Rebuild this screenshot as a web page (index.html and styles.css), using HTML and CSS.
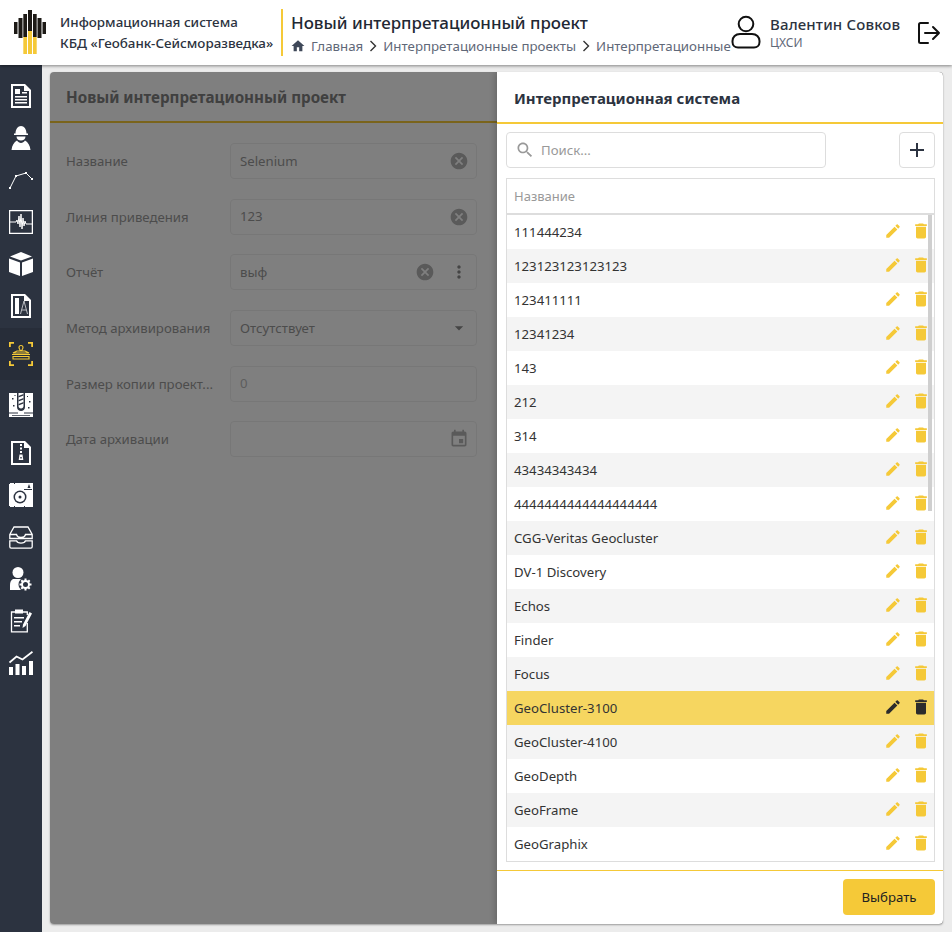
FILE: index.html
```html
<!DOCTYPE html>
<html lang="ru">
<head>
    <meta charset="UTF-8">
    <title>Новый интерпретационный проект</title>
    <link rel="stylesheet" href="styles.css">
</head>
<body>
    <svg class="sprite" width="0" height="0">
        <symbol id="i-edit" viewBox="0 0 24 24"><path d="M3 17.25V21h3.75L17.81 9.94l-3.75-3.75L3 17.25zM20.71 7.04c.39-.39.39-1.02 0-1.41l-2.34-2.34c-.39-.39-1.02-.39-1.41 0l-1.83 1.83 3.75 3.75 1.83-1.83z"/></symbol>
        <symbol id="i-del" viewBox="0 0 24 24"><path d="M6 19c0 1.1.9 2 2 2h8c1.1 0 2-.9 2-2V7H6v12zM19 4h-3.5l-1-1h-5l-1 1H5v2h14V4z"/></symbol>
        <symbol id="i-clear" viewBox="0 0 24 24"><path d="M12 2C6.47 2 2 6.47 2 12s4.47 10 10 10 10-4.47 10-10S17.53 2 12 2zm5 13.59L15.59 17 12 13.41 8.41 17 7 15.59 10.59 12 7 8.41 8.41 7 12 10.59 15.59 7 17 8.41 13.41 12 17 15.59z"/></symbol>
    </svg>

    <header class="topbar">
        <svg class="logo" width="32" height="44" viewBox="0 0 32 44">
            <rect x="0" y="12" width="3.500" height="12" fill="#1d1a16"/>
            <rect x="4.500" y="8" width="4" height="20" fill="#1d1a16"/>
            <rect x="9.300" y="4" width="3.700" height="23" fill="#1d1a16"/>
            <rect x="14" y="0" width="4" height="21" fill="#1d1a16"/>
            <rect x="19" y="4" width="3.700" height="23" fill="#1d1a16"/>
            <rect x="23.500" y="8" width="4" height="20" fill="#1d1a16"/>
            <rect x="28.500" y="12" width="3.500" height="12" fill="#1d1a16"/>
            <rect x="9.300" y="27" width="3.700" height="17" fill="#f5c938"/>
            <rect x="14" y="21" width="4" height="23" fill="#f5c938"/>
            <rect x="19" y="27" width="3.700" height="17" fill="#f5c938"/>
        </svg>
        <div class="system-name">
            <div>Информационная система</div>
            <div>КБД «Геобанк-Сейсморазведка»</div>
        </div>
        <div class="page-head">
            <div class="page-title">Новый интерпретационный проект</div>
            <div class="crumbs">
                <svg class="crumb-home" width="14" height="14" viewBox="0 0 24 24"><path d="M10 21v-7h4v7h5.500v-9H23L12 2 1 12h3.500v9z"/></svg>
                <span>Главная</span>
                <svg class="crumb-sep" width="10" height="12" viewBox="0 0 10 12"><path d="M2.500 1l5 5-5 5"/></svg>
                <span>Интерпретационные проекты</span>
                <svg class="crumb-sep" width="10" height="12" viewBox="0 0 10 12"><path d="M2.500 1l5 5-5 5"/></svg>
                <span>Интерпретационные</span>
            </div>
        </div>
        <div class="user">
            <svg class="user-icon" width="30" height="34" viewBox="0 0 30 34"><circle cx="15" cy="9" r="7.300"/><path d="M9 19h12c4.500 0 7.500 3 7.500 7v1c0 3.500-2.500 5.500-5.500 5.500H7c-3 0-5.500-2-5.500-5.500v-1c0-4 3-7 7.500-7z"/></svg>
            <div class="user-text">
                <div class="user-name">Валентин Совков</div>
                <div class="user-org">ЦХСИ</div>
            </div>
            <svg class="logout" width="24" height="24" viewBox="0 0 24 24"><path d="M11 2H3.500C2.500 2 2 2.500 2 3.500v17c0 1 .5 1.500 1.500 1.500H11M8 12h14M16 6l6 6-6 6"/></svg>
        </div>
    </header>

    <div class="layout">
        <nav class="sidebar">
            <a class="nav-item">
                <svg width="24" height="24" viewBox="0 0 24 24"><path class="w" d="M2 0h14l6 6v18H2z"/><path class="d" d="M4 2h11v5h5v15H4z"/><path class="w" d="M6 5h5v5H6zM13 8h5v1.500h-5zM6 12h12v1.500H6zM6 15h12v1.500H6zM6 18h12v1.500H6z"/></svg>
            </a>
            <a class="nav-item">
                <svg width="24" height="24" viewBox="0 0 24 24"><path class="w" d="M6.500 7.500C6.500 3 9 0 12 0s5.500 3 5.500 7.500H19V9H5V7.500zM7.500 10.500h9c0 2.500-2 4-4.500 4s-4.500-1.500-4.500-4zM8 14.500c1 1.500 2.500 2.500 4 2.500s3-1 4-2.500c3 1.500 5 5 5.500 9.500h-19C3 19.500 5 16 8 14.500z"/></svg>
            </a>
            <a class="nav-item">
                <svg width="24" height="24" viewBox="0 0 24 24"><path class="l thin" d="M1 20L7 8l10-3 6 6"/><path class="w" d="M0 19h2v2H0zM6 7h2v2H6zM16 4h2v2h-2zM22 10h2v2h-2z"/></svg>
            </a>
            <a class="nav-item">
                <svg width="24" height="24" viewBox="0 0 24 24"><path class="l" d="M.6.6h22.800v22.800H.6z"/><path class="l thin" d="M1 12h6l1-2 1 4 1-8 1 11 1-13 1 15 1-11 1 8 1-5 1 3h6"/></svg>
            </a>
            <a class="nav-item">
                <svg width="24" height="24" viewBox="0 0 24 24"><path class="w" d="M12 0l11 4.500L12 8.500 1 4.500zM0 6.500l11 4V24L0 20zM24 6.500l-11 4V24l11-4z"/></svg>
            </a>
            <a class="nav-item">
                <svg width="24" height="24" viewBox="0 0 24 24"><path class="w" d="M2 0h14l6 6v18H2z"/><path class="d" d="M4 2h11v5h5v15H4z"/><path class="w" d="M6 4h4v16H6z"/><path class="l thin faded" d="M15 7l-3.500 13M15 7l3.500 13M12.500 16h5"/></svg>
            </a>
            <a class="nav-item active">
                <svg width="24" height="24" viewBox="0 0 24 24"><path class="yl" d="M.9 5V.9H5M19 .9h4.100V5M.9 19v4.100H5M19 23.100h4.100V19"/><path class="yl thin" d="M10 5.500c0-1.100.9-2 2-2s2 .9 2 2c0 1-1 1.500-1 3h-2c0-1.500-1-2-1-3zM4 11l4-2h8l4 2zM3 12.500h18M4 14.500h16v2.500H4z"/></svg>
            </a>
            <a class="nav-item after-active">
                <svg width="24" height="24" viewBox="0 0 24 24"><path class="w" d="M0 0h24v24H0z"/><path class="d" d="M8 0h8v14c0 2.500-2 4-4 4s-4-1.500-4-4z"/><path class="w" d="M9.500 0h5v13c0 1.500-1 2.500-2.500 2.500S9.500 14.500 9.500 13z"/><path class="d" d="M0 19.500h9v1H0zM15 19.500h9v1h-9zM3 22h18v.8H3zM9.500 3l5-2v1.500l-5 2zM9.500 7l5-2v1.500l-5 2zM9.500 11l5-2v1.500l-5 2zM3 5h1.500v1.500H3zM20 8h1.500v1.500H20zM4 12h1.500v1.500H4zM19 14h1.500v1.500H19zM5.500 2h1v1h-1zM18 3h1v1h-1z"/></svg>
            </a>
            <a class="nav-item after-drill">
                <svg width="24" height="24" viewBox="0 0 24 24"><path class="w" d="M2 0h14l6 6v18H2z"/><path class="d" d="M4 2h11v5h5v15H4z"/><path class="w" d="M11 3h2v2h-2zM11 6.500h2v2h-2zM11 10h2v2h-2zM10.500 13.500h3l.8 5.500h-4.600z"/><path class="d" d="M11.300 16h1.400v1.500h-1.400z"/></svg>
            </a>
            <a class="nav-item">
                <svg width="24" height="24" viewBox="0 0 24 24"><path class="w" d="M0 0h24v24H0z"/><circle class="d" cx="11" cy="14" r="6.500"/><circle class="w" cx="11" cy="14" r="5"/><circle class="d" cx="11" cy="14" r="1.500"/><path class="d" d="M15 6h8v1h-8zM20 1l1.500 4h-3zM0 0h1v1H0zM5 0h1v1H5zM0 23h1v1H0zM5 23h1v1H5zM15 23h1v1h-1z"/></svg>
            </a>
            <a class="nav-item">
                <svg width="24" height="24" viewBox="0 0 24 24"><path class="l" d="M.8 9.500L5 2h14l4.200 7.500v4H.8zM.8 9.500h6.700c.5 2 1.500 3 4.500 3s4-1 4.500-3h6.700M.8 15.800h6.700c.5 1.500 1.500 2.300 4.500 2.300s4-.8 4.500-2.300h6.700v6c0 .7-.5 1.400-1.400 1.400H2.200c-.9 0-1.400-.7-1.400-1.400z"/></svg>
            </a>
            <a class="nav-item">
                <svg width="24" height="24" viewBox="0 0 24 24"><circle class="w" cx="9" cy="5.500" r="5.500"/><path class="w" d="M4 12h10c-1 1-2 3-2 5s1 4 2 6H1v-5c0-3 1-5 3-6z"/><circle class="d" cx="16.500" cy="17.500" r="7"/><circle class="gear" cx="16.500" cy="17.500" r="3.500"/><path class="l gear-teeth" d="M16.500 11.500v2.500M16.500 21v2.500M10.500 17.500H13M20 17.500h2.500M12.300 13.300l1.700 1.700M19 20l1.700 1.700M12.300 21.700L14 20M19 15l1.700-1.700"/></svg>
            </a>
            <a class="nav-item">
                <svg width="24" height="24" viewBox="0 0 24 24"><path class="l" d="M7 3H2.500v19.800h15.800V14M14 3h4.300v3"/><path class="w" d="M6 .5h8v4H6zM5 8h10v1.500H5zM5 12h8v1.500H5zM5 16h6v1.500H5zM20.500 3L23 4.500 16.500 17l-3 2 .5-3.500z"/></svg>
            </a>
            <a class="nav-item">
                <svg width="24" height="24" viewBox="0 0 24 24"><path class="w" d="M0 16h4v8H0zM6.500 13h4v11h-4zM13 15h4v9h-4zM20 10h4v14h-4z"/><path class="l thick" d="M.5 11.500L7.500 5.500l6 3L23.500.8"/></svg>
            </a>
        </nav>

        <main class="content">
            <section class="card">
                <h2 class="card-title">Новый интерпретационный проект</h2>
                <form class="form">
                    <label class="form-label">Название</label>
                    <div class="field"><span class="field-value">Selenium</span><svg class="ic clear"><use href="#i-clear"/></svg></div>
                    <label class="form-label">Линия приведения</label>
                    <div class="field"><span class="field-value">123</span><svg class="ic clear"><use href="#i-clear"/></svg></div>
                    <label class="form-label">Отчёт</label>
                    <div class="field">
                        <span class="field-value">выф</span>
                        <svg class="ic clear"><use href="#i-clear"/></svg>
                        <svg class="ic more" viewBox="0 0 24 24"><path d="M12 8c1.100 0 2-.9 2-2s-.9-2-2-2-2 .9-2 2 .9 2 2 2zm0 2c-1.100 0-2 .9-2 2s.9 2 2 2 2-.9 2-2-.9-2-2-2zm0 6c-1.100 0-2 .9-2 2s.9 2 2 2 2-.9 2-2-.9-2-2-2z"/></svg>
                    </div>
                    <label class="form-label">Метод архивирования</label>
                    <div class="field"><span class="field-value">Отсутствует</span><svg class="ic more" viewBox="0 0 24 24"><path d="M7 10l5 5 5-5z"/></svg></div>
                    <label class="form-label">Размер копии проект...</label>
                    <div class="field field-off"><span class="field-value">0</span></div>
                    <label class="form-label">Дата архивации</label>
                    <div class="field field-off"><span class="field-value"></span><svg class="ic cal" viewBox="0 0 24 24"><path d="M17 12h-5v5h5v-5zM16 1v2H8V1H6v2H5c-1.110 0-1.990.9-1.990 2L3 19c0 1.100.89 2 2 2h14c1.100 0 2-.9 2-2V5c0-1.100-.9-2-2-2h-1V1h-2zm3 18H5V8h14v11z"/></svg></div>
                </form>

                <div class="backdrop"></div>

                <aside class="drawer">
                    <h2 class="drawer-title">Интерпретационная система</h2>
                    <div class="toolbar">
                        <div class="search">
                            <svg width="20" height="20" viewBox="0 0 24 24"><path d="M15.500 14h-.79l-.28-.27C15.410 12.590 16 11.110 16 9.500 16 5.910 13.090 3 9.500 3S3 5.910 3 9.500 5.910 16 9.500 16c1.610 0 3.090-.59 4.230-1.570l.27.28v.79l5 4.990L20.490 19l-4.990-5zm-6 0C7.010 14 5 11.990 5 9.500S7.010 5 9.500 5 14 7.010 14 9.500 11.990 14 9.500 14z"/></svg>
                            <span>Поиск...</span>
                        </div>
                        <button class="add-btn" type="button"><svg width="24" height="24" viewBox="0 0 24 24"><path d="M19 13h-6v6h-2v-6H5v-2h6V5h2v6h6v2z"/></svg></button>
                    </div>
                    <div class="table">
                        <div class="table-head">Название</div>
                        <div class="table-body" id="rows"></div>
                        <div class="scrollbar"></div>
                    </div>
                    <div class="drawer-foot">
                        <button class="primary-btn" type="button">Выбрать</button>
                    </div>
                </aside>
            </section>
        </main>
    </div>

    <script src="rows.js"></script>
</body>
</html>
```

FILE: styles.css
```css
* {
    margin: 0;
    padding: 0;
    box-sizing: border-box;
    font-family: "Noto Sans", "Open Sans", sans-serif;
}

html, body {
    height: 100%;
    overflow: hidden;
}

body {
    background-color: #ececec;
    color: #2c3340;
    display: flex;
    flex-direction: column;
    font-size: 13.2px;
}

.sprite {
    position: absolute;
}

/* top bar */
.topbar {
    height: 65px;
    flex: none;
    display: flex;
    align-items: center;
    background-color: #fff;
    box-shadow: 0 1px 3px rgba(0, 0, 0, 0.45);
    position: relative;
    z-index: 2;
    padding-left: 14px;
}

.logo {
    flex: none;
    margin-top: -1px;
}

.system-name {
    margin-left: 14px;
    width: 221px;
    flex: none;
    font-size: 13.4px;
    line-height: 21px;
    font-weight: 500;
    white-space: nowrap;
}

.page-head {
    height: 47px;
    flex: none;
    width: 450px;
    overflow: hidden;
    border-left: 2px solid #f5c938;
    padding-left: 8px;
    margin-top: -1px;
}

.page-title {
    font-size: 16.9px;
    line-height: 27px;
    font-weight: 500;
    color: #222833;
    white-space: nowrap;
}

.crumbs {
    display: flex;
    align-items: center;
    gap: 5px;
    font-size: 13.3px;
    line-height: 20px;
    color: #5f6878;
    white-space: nowrap;
}

.crumb-home {
    fill: #3f4859;
    flex: none;
    margin-right: 1px;
}

.crumb-sep {
    fill: none;
    stroke: #333;
    stroke-width: 1.4;
    flex: none;
}

.user {
    display: flex;
    align-items: center;
    flex: none;
}

.user-icon {
    fill: none;
    stroke: #111;
    stroke-width: 2;
    margin-top: -2px;
}

.user-text {
    margin-left: 9px;
    width: 147px;
}

.user-name {
    font-size: 15px;
    line-height: 20px;
    font-weight: 500;
    letter-spacing: 0.15px;
    white-space: nowrap;
}

.user-org {
    font-size: 12px;
    line-height: 18px;
    color: #5f6878;
}

.logout {
    fill: none;
    stroke: #111;
    stroke-width: 2;
    stroke-linecap: round;
    stroke-linejoin: round;
}

/* page layout */
.layout {
    flex: 1;
    display: flex;
    min-height: 0;
}

.sidebar {
    width: 42px;
    flex: none;
    background-color: #2c3340;
    padding-top: 10px;
    display: flex;
    flex-direction: column;
}

.nav-item {
    height: 42px;
    display: flex;
    align-items: center;
    justify-content: center;
    flex: none;
}

.nav-item.active {
    height: 52px;
    margin-top: 1px;
    background-color: #272d39;
}

.nav-item.after-active {
    margin-top: 4px;
}

.nav-item.after-drill {
    margin-top: 6px;
}

.nav-item svg .w {
    fill: #fff;
}

.nav-item svg .d {
    fill: #2c3340;
}

.nav-item svg .l {
    fill: none;
    stroke: #fff;
    stroke-width: 1.3;
}

.nav-item svg .l.thin {
    stroke-width: 1;
}

.nav-item svg .l.faded {
    stroke: #b9bcc2;
}

.nav-item svg .l.thick {
    stroke-width: 1.8;
}

.nav-item svg .l.gear-teeth {
    stroke-width: 2;
}

.nav-item svg .gear {
    fill: none;
    stroke: #fff;
    stroke-width: 2;
}

.nav-item svg .yl {
    fill: none;
    stroke: #f5c938;
    stroke-width: 1.8;
}

.nav-item svg .yl.thin {
    stroke-width: 1.1;
}

.content {
    flex: 1;
    min-width: 0;
    padding: 7px 9px 8px 8px;
}

.card {
    height: 100%;
    background-color: #fff;
    border-radius: 4px;
    box-shadow: 0 1px 2px rgba(0, 0, 0, 0.35);
    position: relative;
    overflow: hidden;
}

.card-title {
    height: 51px;
    border-bottom: 2px solid #f5c938;
    padding-left: 16px;
    font-size: 15.2px;
    line-height: 50px;
    font-weight: 700;
    color: #808080;
}

.form {
    display: grid;
    grid-template-columns: 164px 247px;
    row-gap: 19.7px;
    padding: 20px 0 0 16px;
    align-items: center;
}

.form-label {
    color: #999;
    white-space: nowrap;
    height: 20px;
    line-height: 20px;
}

.field {
    height: 36px;
    border: 1px solid #eee;
    border-radius: 4px;
    display: flex;
    align-items: center;
    padding: 0 7px 1px 9px;
    color: #999;
}

.field-value {
    flex: 1;
}

.field-off {
    color: #bbb;
}

.ic {
    width: 20px;
    height: 20px;
    flex: none;
    margin-top: 1px;
    fill: #b4b4b4;
}

.more {
    fill: #8a8a8a;
}

.clear + .more {
    margin-left: 14px;
}

.backdrop {
    position: absolute;
    inset: 0;
    background-color: rgba(0, 0, 0, 0.5);
}

/* right drawer */
.drawer {
    position: absolute;
    top: 0;
    right: 0;
    bottom: 0;
    width: 446px;
    background-color: #fff;
    display: flex;
    flex-direction: column;
    border-radius: 0 4px 4px 0;
    box-shadow: -2px 0 6px rgba(0, 0, 0, 0.2);
}

.drawer-title {
    height: 52px;
    flex: none;
    border-bottom: 2px solid #f5c938;
    padding-left: 17px;
    font-size: 15px;
    line-height: 53px;
    font-weight: 700;
    color: #2c3340;
}

.toolbar {
    display: flex;
    justify-content: space-between;
    padding: 8px 8px 0 9px;
    flex: none;
}

.search {
    width: 320px;
    height: 36px;
    border: 1px solid #ddd;
    border-radius: 4px;
    display: flex;
    align-items: center;
    gap: 6px;
    padding-left: 8px;
    color: #999;
}

.search svg {
    fill: #999;
}

.add-btn {
    width: 36px;
    height: 36px;
    background-color: #fff;
    border: 1px solid #ddd;
    border-radius: 4px;
    display: flex;
    align-items: center;
    justify-content: center;
}

.add-btn svg {
    fill: #2c3340;
}

.table {
    margin: 10px 8px 0 9px;
    border: 1px solid #ddd;
    position: relative;
    flex: none;
}

.table-head {
    height: 36px;
    border-bottom: 2px solid #ddd;
    padding-left: 7px;
    line-height: 34px;
    font-size: 13px;
    color: #999;
}

.row {
    height: 34px;
    display: flex;
    align-items: center;
    padding: 0 3px 0 7px;
    color: #333;
}

.row:nth-child(even) {
    background-color: #f4f4f4;
}

.row.selected {
    background-color: #f6d660;
}

.row-name {
    flex: 1;
}

.row-icon {
    flex: none;
    fill: #f5c938;
    margin-bottom: 2px;
}

.row-edit {
    width: 18px;
    height: 18px;
    margin-right: 9px;
}

.row-del {
    width: 20px;
    height: 20px;
}

.selected .row-icon {
    fill: #2c2c2c;
}

.scrollbar {
    position: absolute;
    top: 36px;
    right: 2px;
    width: 4px;
    height: 296px;
    background-color: #cfcfcf;
}

.drawer-foot {
    margin-top: 8px;
    border-top: 1px solid #f5c938;
    flex: 1;
    padding: 8px 8px 0 0;
    display: flex;
    justify-content: flex-end;
    align-items: flex-start;
}

.primary-btn {
    width: 92px;
    height: 36px;
    background-color: #f5c938;
    border: none;
    border-radius: 4px;
    font-size: 13.2px;
    color: #222;
}
```

FILE: rows.js
```js
var names = ['111444234', '123123123123123', '123411111', '12341234', '143', '212', '314', '43434343434',
    '4444444444444444444', 'CGG-Veritas Geocluster', 'DV-1 Discovery', 'Echos', 'Finder', 'Focus',
    'GeoCluster-3100', 'GeoCluster-4100', 'GeoDepth', 'GeoFrame', 'GeoGraphix'];

var rows = document.getElementById('rows');

names.forEach(function (name) {
    var row = document.createElement('div');
    row.className = name === 'GeoCluster-3100' ? 'row selected' : 'row';
    row.innerHTML = '<span class="row-name">' + name + '</span>' +
        '<svg class="row-icon row-edit"><use href="#i-edit"/></svg>' +
        '<svg class="row-icon row-del"><use href="#i-del"/></svg>';
    rows.appendChild(row);
});
```
